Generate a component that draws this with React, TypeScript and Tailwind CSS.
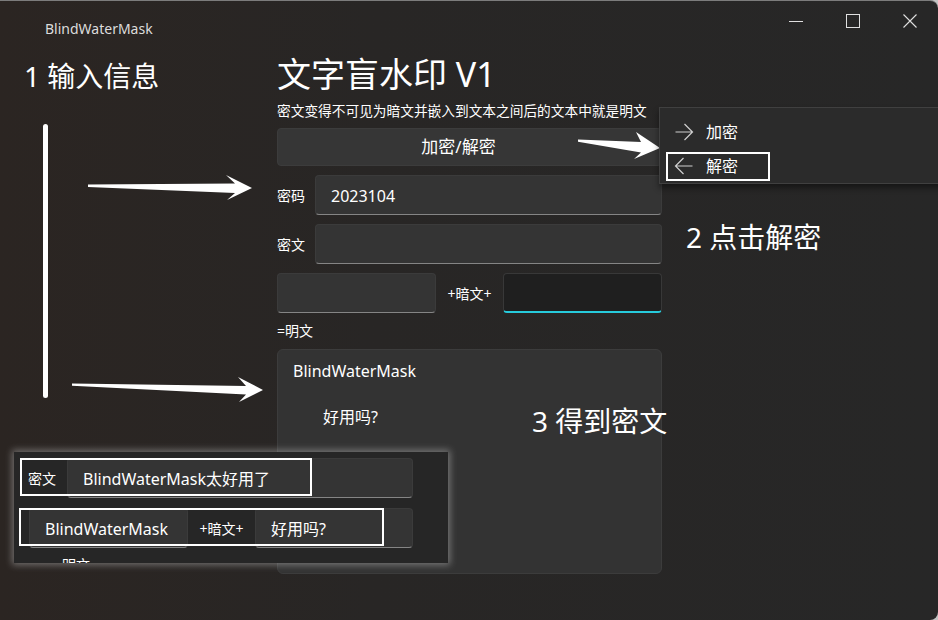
import * as React from "react";

const font = "font-['Noto_Sans','Noto_Sans_CJK_SC',sans-serif]";

const fieldClass =
  "h-[40px] rounded-[4px] border border-[#3b3b3b] border-b-[#858585] bg-[#343434] text-[16px] text-white flex items-center px-[15px] pt-[2px]";

function Field({ value, className = "" }: { value?: string; className?: string }) {
  return <div className={`${fieldClass} ${className}`}>{value}</div>;
}

function ArrowRightIcon() {
  return (
    <svg width="20" height="20" viewBox="0 0 20 20" fill="none" stroke="#d0d0d0" strokeWidth="1.2">
      <path d="M1.5 10h17M10.5 2l8 8-8 8" />
    </svg>
  );
}

function ArrowLeftIcon() {
  return (
    <svg width="20" height="20" viewBox="0 0 20 20" fill="none" stroke="#d0d0d0" strokeWidth="1.2">
      <path d="M18.5 10h-17M9.5 2l-8 8 8 8" />
    </svg>
  );
}

function CaptionButtons() {
  return (
    <div className="flex">
      <div className="flex h-[40px] w-[57px] items-center justify-center">
        <svg width="16" height="16" viewBox="0 0 16 16" stroke="#e0e0e0" strokeWidth="1">
          <path d="M1 8.5h14" />
        </svg>
      </div>
      <div className="flex h-[40px] w-[57px] items-center justify-center">
        <svg width="16" height="16" viewBox="0 0 16 16" fill="none" stroke="#e0e0e0" strokeWidth="1">
          <rect x="1.5" y="1.5" width="13" height="13" />
        </svg>
      </div>
      <div className="flex h-[40px] w-[57px] items-center justify-center">
        <svg width="16" height="16" viewBox="0 0 16 16" stroke="#e0e0e0" strokeWidth="1.1">
          <path d="M1.5 1.5l13 13M14.5 1.5l-13 13" />
        </svg>
      </div>
    </div>
  );
}

function Annotations() {
  return (
    <svg
      className="pointer-events-none absolute left-0 top-0"
      width="938"
      height="620"
      viewBox="0 0 938 620"
    >
      <rect x="43" y="123" width="5" height="274" rx="2.5" fill="#ffffff" />
      <polygon
        fill="#ffffff"
        points="88,183.5 235,182.5 226,174 252,187 227,199 235,192 88,186"
      />
      <polygon
        fill="#ffffff"
        points="72,382.5 246,385 238,376 263,389 239,401 246,393.5 72,384.8"
      />
      <polygon
        fill="#ffffff"
        points="578,138.5 641,141 636,131 660,147 634,158 641,151.5 578,140.8"
      />
    </svg>
  );
}

function Flyout() {
  return (
    <div className="absolute left-[659px] top-[106px] h-[77px] w-[290px] border border-[#404040] bg-[#2b2b2b] shadow-[0_4px_6px_rgba(0,0,0,0.45)]">
      <div className="flex h-[36px] items-center gap-[12px] pl-[14px] pt-[12px] text-[16px] text-white">
        <ArrowRightIcon />
        <span>加密</span>
      </div>
      <div className="flex h-[36px] items-center gap-[12px] pl-[14px] pt-[8px] text-[16px] text-white">
        <ArrowLeftIcon />
        <span>解密</span>
      </div>
      <div className="absolute left-[6px] top-[44px] h-[29px] w-[104px] border-2 border-white" />
    </div>
  );
}

function Inset() {
  return (
    <div className="absolute left-[14px] top-[451px] h-[111px] w-[434px] overflow-hidden bg-[#262626] shadow-[0_0_7px_2px_rgba(200,200,200,0.45)]">
      <div className="flex flex-col gap-[10px] pl-[14px] pt-[6px]">
        <div className="flex items-center">
          <span className="w-[39px] text-[14px] text-white">密文</span>
          <Field className="w-[346px]" value="BlindWaterMask太好用了" />
        </div>
        <div className="flex items-center pl-[1px]">
          <Field className="w-[159px]" value="BlindWaterMask" />
          <span className="w-[67px] text-center text-[14px] text-white">+暗文+</span>
          <Field className="w-[158px]" value="好用吗?" />
        </div>
        <span className="pl-[26px] text-[14px] leading-[14px] text-white">=明文</span>
      </div>
      <div className="absolute left-[6px] top-[6px] h-[38px] w-[292px] border-2 border-white" />
      <div className="absolute left-[5px] top-[56px] h-[38px] w-[365px] border-2 border-white" />
    </div>
  );
}

export default function App() {
  return (
    <div className={`relative h-[620px] w-[938px] overflow-hidden bg-[#c4c4c4] ${font}`}>
      <div className="relative h-full w-full rounded-r-[8px] border-t border-[#7c7c7c] bg-linear-to-r from-[#2b2522] via-[#282625] via-40% to-[#272727]">
        <div className="flex h-[44px] justify-between">
          <span className="pl-[45px] pt-[18px] text-[14px] leading-[20px] text-[#dcdcdc]">
            BlindWaterMask
          </span>
          <CaptionButtons />
        </div>

        <div className="ml-[277px] flex w-[385px] flex-col">
          <h1 className="mt-[8px] text-[34px] leading-[42px] text-white">文字盲水印 V1</h1>
          <p className="mt-[7px] text-[13.7px] leading-[18px] text-white">
            密文变得不可见为暗文并嵌入到文本之间后的文本中就是明文
          </p>
          <div className="mt-[8px] flex h-[38px] items-center justify-center rounded-[4px] border border-[#3c3c3c] bg-[#363636] pr-[22px] text-[17px] text-white">
            加密/解密
          </div>

          <div className="mt-[9px] flex flex-col gap-[9px]">
            <div className="flex items-center">
              <span className="w-[38px] text-[14px] text-white">密码</span>
              <Field className="flex-1" value="2023104" />
            </div>
            <div className="flex items-center">
              <span className="w-[38px] text-[14px] text-white">密文</span>
              <Field className="flex-1" />
            </div>
            <div className="flex items-center">
              <Field className="w-[159px]" />
              <span className="flex-1 text-center text-[14px] text-white">+暗文+</span>
              <div className="h-[40px] w-[159px] rounded-[4px] border border-[#383838] border-b-2 border-b-[#27cbdc] bg-[#1f1f1f]" />
            </div>
            <span className="text-[14px] leading-[18px] text-white">=明文</span>
            <div className="h-[225px] rounded-[6px] border border-[#3c3c3c] bg-[#333333] px-[15px] pt-[9px] text-[16px] text-white">
              <div>BlindWaterMask</div>
              <div className="ml-[30px] mt-[22px]">好用吗?</div>
            </div>
          </div>
        </div>

        <span className="absolute left-[24px] top-[57px] text-[28px] leading-[36px] text-white">
          1 输入信息
        </span>
        <span className="absolute left-[686px] top-[218px] text-[28px] leading-[36px] text-white">
          2 点击解密
        </span>
        <span className="absolute left-[532px] top-[402px] text-[28px] leading-[36px] text-white">
          3 得到密文
        </span>

        <Annotations />
        <Flyout />
        <Inset />
      </div>
    </div>
  );
}
